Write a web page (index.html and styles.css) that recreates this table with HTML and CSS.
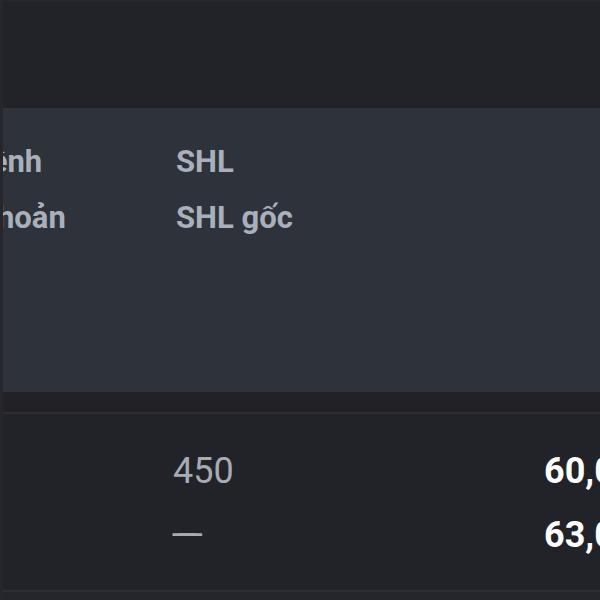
FILE: index.html
```html
<!DOCTYPE html>
<html lang="vi">
<head>
<meta charset="utf-8">
<link rel="stylesheet" href="styles.css">
</head>
<body>
<div class="frame">
  <div class="toolbar"></div>
  <div class="thead">
    <div class="hcell">
      <div>Mã lệnh</div>
      <div>Tài khoản</div>
    </div>
    <div class="hcell">
      <div>SHL</div>
      <div>SHL gốc</div>
    </div>
  </div>
  <div class="spacer"></div>
  <div class="tbody">
    <div class="cell"></div>
    <div class="cell qty">
      <div>450</div>
      <div class="dash">——</div>
    </div>
    <div class="cell price">
      <div>60,000</div>
      <div>63,000</div>
    </div>
  </div>
  <div class="after"></div>
</div>
</body>
</html>
```
FILE: styles.css
```css
html, body {
  margin: 0;
  padding: 0;
  background: #222328;
}
body {
  width: 600px;
  height: 600px;
  overflow: hidden;
  font-family: Roboto, "Noto Sans", "Liberation Sans", sans-serif;
}
.frame {
  width: 600px;
  height: 600px;
  overflow: hidden;
  border-top: 2px solid #26272d;
  border-left: 3px solid #26272d;
  box-sizing: border-box;
}
.toolbar {
  height: 106px;
}
.thead {
  display: grid;
  grid-template-columns: 245px 1fr;
  margin-left: -72px;
  height: 284px;
  box-sizing: border-box;
  padding-top: 26px;
  background: #2e323b;
  font-size: 31px;
  font-weight: 700;
  line-height: 56px;
  color: #a9b0bc;
  white-space: nowrap;
}
.spacer {
  height: 20px;
  background: #212126;
  border-bottom: 2px solid #2c2e35;
}
.tbody {
  display: grid;
  grid-template-columns: 170px 371px 1fr;
  padding: 25px 0 23px;
  font-size: 36px;
  line-height: 64px;
  white-space: nowrap;
  border-bottom: 2px solid #2c2e35;
}
.qty {
  color: #a7abb3;
}
.dash {
  color: #a7abb3;
  letter-spacing: -22px;
  margin-left: -3px;
  padding-top: 2px;
  line-height: 62px;
}
.price {
  color: #ffffff;
  font-weight: 700;
  overflow: hidden;
}
.after {
  height: 20px;
  background: #25262b;
}
```
